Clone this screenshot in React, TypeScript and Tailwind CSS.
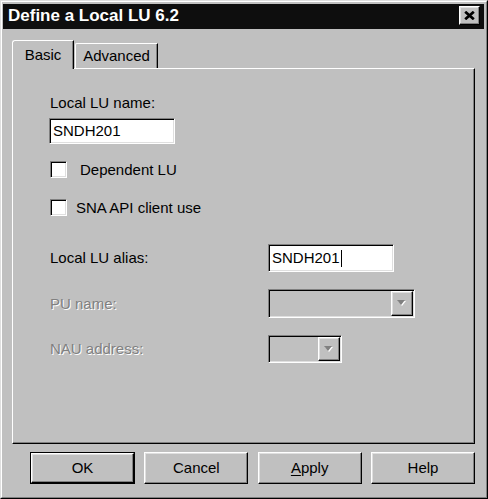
import React from 'react';

const raised =
  'border border-t-white border-l-white border-r-black border-b-black shadow-[inset_-1px_-1px_0_#808080,inset_1px_1px_0_#dfdfdf]';
const sunken =
  'border border-t-[#808080] border-l-[#808080] border-r-white border-b-white shadow-[inset_1px_1px_0_#000,inset_-1px_-1px_0_#dfdfdf]';
const dimText = 'text-[#808080] [text-shadow:1px_1px_0_#fff]';

const DropArrow = () => (
  <svg width="10" height="7" viewBox="0 0 10 7">
    <polygon points="1,1 9,1 5,6" fill="#fff" />
    <polygon points="0,0 8,0 4,5" fill="#808080" />
  </svg>
);

const Combo = ({ width }: { width: string }) => (
  <div className={`${width} h-full bg-[#c0c0c0] ${sunken} flex justify-end p-[1px]`}>
    <div className={`w-[22px] h-full bg-[#c0c0c0] ${raised} flex items-center justify-center`}>
      <DropArrow />
    </div>
  </div>
);

const Checkbox = ({ label, gap }: { label: string; gap: string }) => (
  <div className="flex items-center h-[17px] ml-[1px]">
    <div className={`w-[17px] h-[17px] bg-white ${sunken}`} />
    <span className={gap}>{label}</span>
  </div>
);

const DialogButton = ({ children, isDefault }: { children: React.ReactNode; isDefault?: boolean }) => {
  if (isDefault) {
    return (
      <div className="w-[105px] h-[32px] border border-black">
        <div className={`w-full h-full ${raised} flex items-center justify-center`}>{children}</div>
      </div>
    );
  }
  return (
    <div className={`w-[104px] h-[32px] ${raised} flex items-center justify-center`}>{children}</div>
  );
};

export default function App() {
  return (
    <div className="w-[488px] h-[499px] bg-[#c0c0c0] border border-t-[#dfdfdf] border-l-[#dfdfdf] border-r-black border-b-black font-['Liberation_Sans',Arial,sans-serif] text-[15px] leading-[18px] text-black select-none">
      <div className="w-full h-full border border-t-white border-l-white border-r-[#808080] border-b-[#808080]">
        {/* title bar */}
        <div className="ml-[1px] mr-[2px] mt-[2px] h-[25px] bg-[#0e0e0e] flex items-start justify-between">
          <span className="pl-[5px] pt-[2px] text-white font-bold text-[17px] leading-[20px]">
            Define a Local LU 6.2
          </span>
          <div className={`mt-[2px] mr-[4px] w-[21px] h-[19px] bg-[#c0c0c0] ${raised} flex items-center justify-center`}>
            <svg width="11" height="9" viewBox="0 0 11 9">
              <path d="M1.2 0.8 L9.8 8.2 M9.8 0.8 L1.2 8.2" stroke="#000" strokeWidth="2.8" />
            </svg>
          </div>
        </div>

        {/* tabs */}
        <div className="mt-[11px] ml-[10px] h-[28px] flex items-end">
          <div className="relative z-10 -mb-[1px] w-[62px] h-[29px] bg-[#c0c0c0] border-t border-l border-t-white border-l-white rounded-tl-[3px] border-r border-r-black shadow-[inset_-1px_0_0_#808080] flex justify-center pt-[5px]">
            Basic
          </div>
          <div className="ml-[1px] w-[83px] h-[25px] bg-[#c0c0c0] border-t border-l border-t-white border-l-white rounded-tl-[2px] border-r border-r-black shadow-[inset_-1px_0_0_#808080] flex justify-center pt-[3px]">
            Advanced
          </div>
        </div>

        {/* panel */}
        <div className="ml-[10px] w-[463px] h-[376px] border border-t-white border-l-white border-r-black border-b-black shadow-[inset_-1px_-1px_0_#808080] pl-[36px] flex flex-col">
          <span className="mt-[25px] ml-[1px]">Local LU name:</span>
          <div className={`mt-[6px] w-[126px] h-[26px] bg-white ${sunken} flex items-center pl-[3px]`}>
            SNDH201
          </div>

          <div className="mt-[17px]">
            <Checkbox label="Dependent LU" gap="ml-[13px]" />
          </div>
          <div className="mt-[21px]">
            <Checkbox label="SNA API client use" gap="ml-[9px]" />
          </div>

          <div className="mt-[28px] h-[28px] flex items-center">
            <span className="w-[219px] pl-[1px]">Local LU alias:</span>
            <div className={`w-[126px] h-full bg-white ${sunken} flex items-center pl-[3px]`}>
              SNDH201
              <span className="ml-[1px] w-[1px] h-[17px] bg-black" />
            </div>
          </div>

          <div className="mt-[17px] h-[29px] flex items-center">
            <span className={`w-[219px] pl-[1px] ${dimText}`}>PU name:</span>
            <Combo width="w-[147px]" />
          </div>

          <div className="mt-[17px] h-[28px] flex items-center">
            <span className={`w-[219px] pl-[1px] ${dimText}`}>NAU address:</span>
            <Combo width="w-[74px]" />
          </div>
        </div>

        {/* buttons */}
        <div className="mt-[8px] ml-[28px] w-[445px] flex justify-between">
          <DialogButton isDefault>OK</DialogButton>
          <DialogButton>Cancel</DialogButton>
          <DialogButton>
            <span>
              <span className="underline underline-offset-2">A</span>pply
            </span>
          </DialogButton>
          <DialogButton>Help</DialogButton>
        </div>
      </div>
    </div>
  );
}
